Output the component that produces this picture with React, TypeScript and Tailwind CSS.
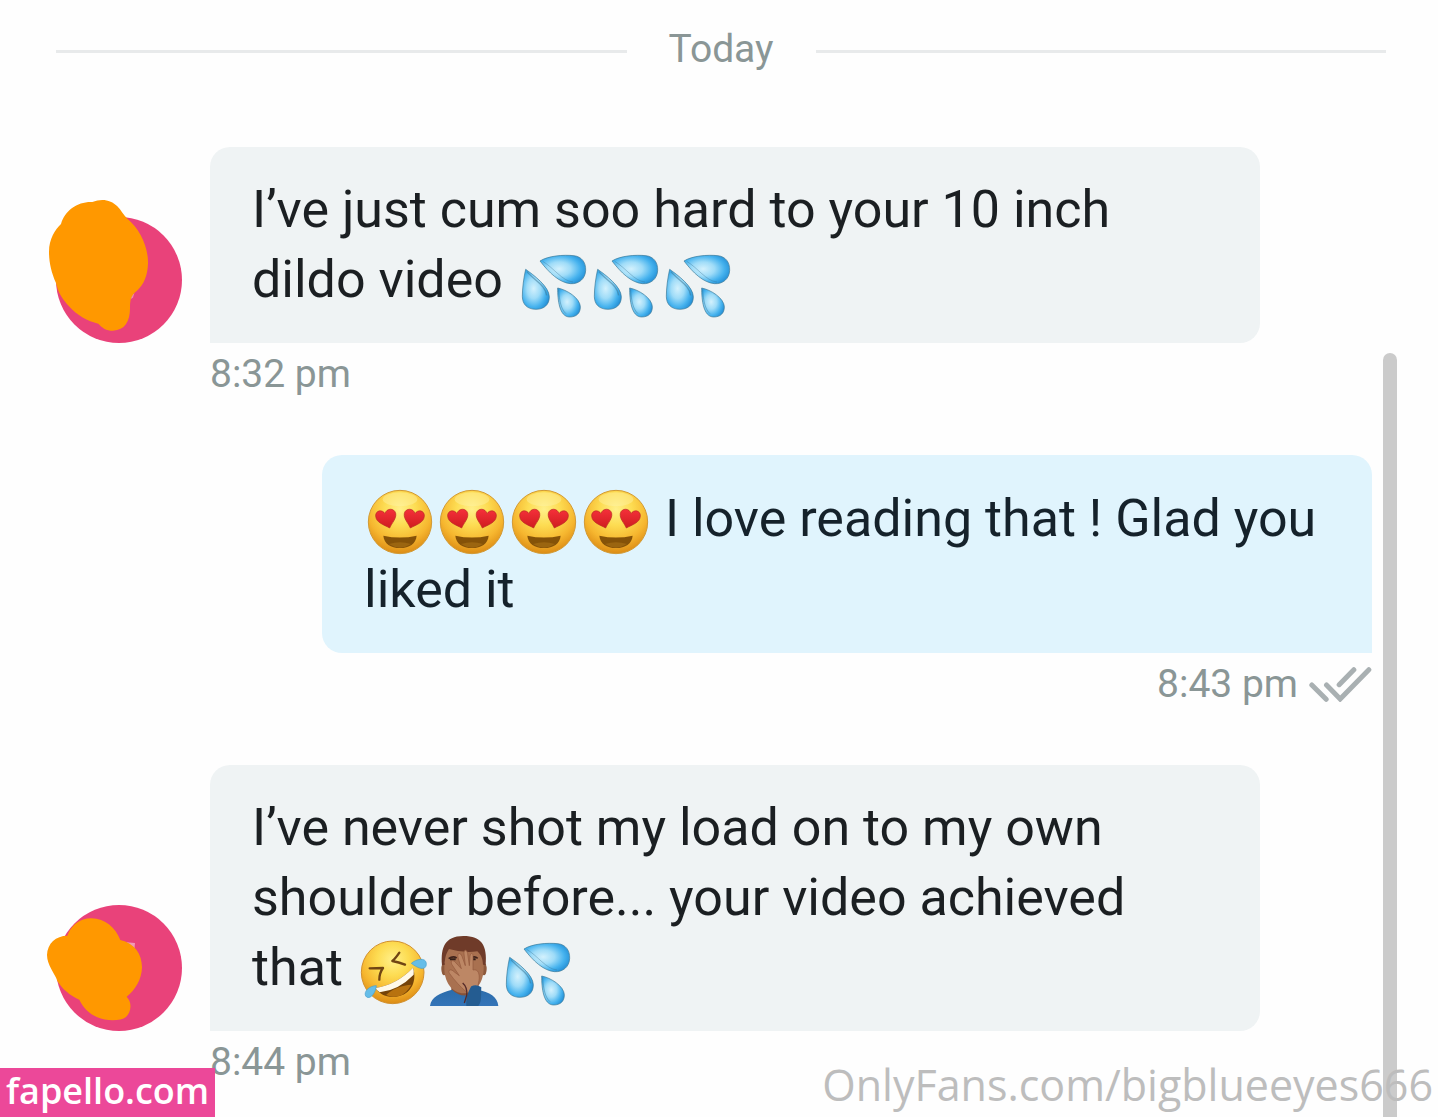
import type { ReactNode } from 'react';

function Gradients() {
  return (
    <svg className="absolute h-0 w-0" aria-hidden="true">
      <defs>
        <radialGradient id="face" cx="0.5" cy="0.3" r="0.72">
          <stop offset="0" stopColor="#fff08a" />
          <stop offset="0.35" stopColor="#fddc52" />
          <stop offset="0.7" stopColor="#f6b62f" />
          <stop offset="1" stopColor="#d98712" />
        </radialGradient>
        <radialGradient id="drop" cx="0.42" cy="0.48" r="0.62">
          <stop offset="0" stopColor="#d3f1fd" />
          <stop offset="0.4" stopColor="#9fdcf8" />
          <stop offset="0.75" stopColor="#45b2ee" />
          <stop offset="1" stopColor="#2590d6" />
        </radialGradient>
        <linearGradient id="heart" x1="0" y1="0" x2="0" y2="1">
          <stop offset="0" stopColor="#f5303a" />
          <stop offset="1" stopColor="#cf1c20" />
        </linearGradient>
        <linearGradient id="shirt" x1="0" y1="0" x2="0" y2="1">
          <stop offset="0" stopColor="#2b6cab" />
          <stop offset="1" stopColor="#3474b8" />
        </linearGradient>
      </defs>
    </svg>
  );
}

const emojiClass = 'mx-[3px] -my-2 inline-block h-[66px] w-[66px] overflow-visible align-middle';

function Drops() {
  return (
    <svg viewBox="32 29 198 198" className={emojiClass} role="img" aria-label="sweat droplets">
      <g fill="url(#drop)" stroke="#3d7896" strokeWidth="2" strokeLinejoin="round">
        <path d="M95 62 C120 46 165 43 197 46 C220 49 233 66 232 90 C231 116 211 132 186 130 C153 127 122 97 95 62Z" />
        <path d="M52 87 C76 104 123 139 123 170 C123 193 107 207 83 207 C57 207 42 192 42 168 C42 145 46 112 52 87Z" />
        <path d="M148 143 C175 148 216 174 216 200 C216 219 204 230 184 230 C153 230 148 179 148 143Z" />
      </g>
      <path d="M103 63 C137 83 161 122 194 125" fill="none" stroke="#37718f" strokeWidth="3" opacity="0.35" />
      <path d="M56 94 C77 120 112 135 115 165" fill="none" stroke="#37718f" strokeWidth="4" opacity="0.5" />
      <path d="M151 148 C153 180 158 207 173 220" fill="none" stroke="#37718f" strokeWidth="3" opacity="0.4" />
    </svg>
  );
}

function HeartEyes() {
  return (
    <svg viewBox="37 41 198 198" className={emojiClass} role="img" aria-label="heart eyes">
      <circle cx="136" cy="140" r="95" fill="url(#face)" stroke="#d29a35" strokeWidth="3" />
      <ellipse cx="136" cy="72" rx="52" ry="21" fill="#fff5ae" opacity="0.4" />
      <g fill="url(#heart)" stroke="#b72a20" strokeWidth="2">
        <path d="M105 158 C87 148 64 142 63 122 C62 105 83 101 91 115 C95 98 119 97 123 114 C126 130 112 142 105 158Z" />
        <path d="M167 158 C185 148 208 142 209 122 C210 105 189 101 181 115 C177 98 153 97 149 114 C146 130 160 142 167 158Z" />
      </g>
      <path d="M86 181 Q136 192 186 181 C184 205 164 218 136 218 C108 218 88 205 86 181Z" fill="#855208" />
      <path d="M103 206 Q136 196 169 206 Q136 228 103 206Z" fill="#9b6510" />
    </svg>
  );
}

function Rofl() {
  return (
    <svg viewBox="30 37 198 198" className={emojiClass} role="img" aria-label="rolling on the floor laughing">
      <circle cx="131" cy="140" r="94" fill="url(#face)" stroke="#d2902d" strokeWidth="3" />
      <g fill="none" stroke="#704513" strokeWidth="7" strokeLinecap="round" strokeLinejoin="round">
        <path d="M62 128 L102 127 Q91 142 91 162" />
        <path d="M151 81 Q139 99 130 106 Q149 109 168 117" />
      </g>
      <path d="M79 187 Q143 177 192 126 C204 162 190 201 151 211 C119 219 91 207 79 187Z" fill="#754308" />
      <path d="M79 187 Q143 177 192 126 Q196 137 194 147 Q150 193 92 200 Q84 195 79 187Z" fill="#fff9e9" />
      <path d="M111 208 C128 190 162 178 187 177 Q172 205 150 211 Q129 216 111 208Z" fill="#b8720f" />
      <path d="M187 113 C201 100 230 94 232 113 C233 135 211 132 187 113Z" fill="#65bde8" stroke="#449fcf" strokeWidth="2" />
      <path d="M82 180 C61 180 43 198 50 211 C60 225 80 205 82 180Z" fill="#65bde8" stroke="#449fcf" strokeWidth="2" />
    </svg>
  );
}

function Facepalm() {
  return (
    <svg viewBox="240 36 210 210" className="mx-px -my-2 inline-block h-[70px] w-[70px] align-middle" role="img" aria-label="man facepalming">
      <path d="M307 188 H382 V222 H307Z" fill="#865239" />
      <path d="M243 246 C247 217 272 208 309 197 Q334 222 365 211 L385 197 C422 204 446 218 448 246Z" fill="url(#shirt)" />
      <ellipse cx="285" cy="135" rx="8" ry="19" fill="#8d593c" />
      <ellipse cx="405" cy="135" rx="8" ry="19" fill="#8d593c" />
      <path d="M286 91 C286 58 311 53 345 53 C379 53 404 59 404 91 V132 C404 173 382 208 345 208 C308 208 286 173 286 132Z" fill="#a97150" />
      <path d="M279 123 C275 70 287 37 343 36 C398 36 415 64 410 123 L402 122 C401 102 395 91 385 82 Q344 88 300 75 C290 91 288 101 287 123Z" fill="#6f3b29" />
      <path d="M299 104 Q312 94 323 102 M366 102 Q377 95 386 103" fill="none" stroke="#40231b" strokeWidth="5" />
      <path d="M303 106 H320 M365 106 H380" stroke="#352019" strokeWidth="6" />
      <path d="M351 203 C333 187 318 171 302 149 C294 136 308 134 316 144 L331 155 L309 122 C302 109 312 106 320 116 L337 134 L327 100 C324 86 334 84 339 97 L349 125 L345 89 C344 75 354 75 356 89 L361 125 L363 97 C364 84 373 86 372 98 L372 138 C387 134 393 149 390 170 L385 194 L363 211Z" fill="#bd8765" stroke="#92583c" strokeWidth="2" />
      <path d="M352 246 C350 218 360 199 367 187 Q382 180 397 190 C395 215 400 231 388 246Z" fill="#245c91" />
      <path d="M341 177 Q356 190 353 214 L346 237" fill="none" stroke="#542a29" strokeWidth="4" />
    </svg>
  );
}

function AvatarOne() {
  return (
    <svg viewBox="78 111 378 378" className="h-[126px] w-[126px] shrink-0 overflow-visible" role="img" aria-label="Avatar">
      <circle cx="267" cy="300" r="189" fill="#e9427a" />
      <path d="M303 345 L313 340 L309 353 L301 358Z" fill="#ee8aa8" />
      <path d="M93 132 C105 91 143 64 187 66 C216 54 244 60 262 79 C274 91 279 104 292 116 C328 145 355 199 354 250 C353 284 343 313 321 332 C302 346 300 361 300 385 C300 425 284 451 249 452 C228 452 217 444 205 431 C173 424 141 406 117 379 C96 357 84 336 78 309 C63 275 57 245 57 215 C57 177 76 148 93 132Z" fill="#ff9800" />
    </svg>
  );
}

function AvatarTwo() {
  return (
    <svg viewBox="78 48 378 378" className="h-[126px] w-[126px] shrink-0 overflow-visible" role="img" aria-label="Avatar">
      <circle cx="267" cy="237" r="189" fill="#e9427a" />
      <path d="M289 160 L315 162 L313 183 L299 174Z" fill="#f09bb6" />
      <path d="M112 140 C124 108 149 88 184 88 C226 89 256 116 271 153 C313 162 336 195 336 235 C335 272 316 303 290 323 C308 342 303 370 288 384 C272 397 229 397 202 385 C177 373 160 357 148 332 C119 319 96 299 82 276 C75 253 51 229 51 198 C52 163 78 140 112 140Z" fill="#ff9800" />
    </svg>
  );
}

function Received({ avatar, time, children }: { avatar: ReactNode; time: string; children: ReactNode }) {
  return (
    <article className="mr-[126px]">
      <div className="flex items-end gap-7">
        {avatar}
        <p className="flex-1 rounded-[20px] rounded-bl-none bg-[#eff3f4] px-[42px] py-7 text-[52px] leading-[70px] text-[#1b1f22]">
          {children}
        </p>
      </div>
      <time className="ml-[154px] block text-[39px] leading-[62px] text-[#8a9696]">{time}</time>
    </article>
  );
}

export default function App() {
  return (
    <main className="relative min-h-screen overflow-hidden bg-[#fefefe] pr-[52px] pl-14 font-['Roboto',sans-serif]">
      <Gradients />
      <header className="flex h-[102px] items-center gap-[42px]">
        <div className="h-[3px] flex-1 bg-[#e8eaeb]" />
        <h1 className="pb-1 text-[39px] leading-[46px] text-[#8a9696]">Today</h1>
        <div className="h-[3px] flex-1 bg-[#e8eaeb]" />
      </header>
      <section className="mt-[45px] flex flex-col gap-[50px]" aria-label="Messages">
        <Received avatar={<AvatarOne />} time="8:32 pm">
          I’ve just cum soo hard to your 10 inch
          <br />
          dildo video <Drops /><Drops /><Drops />
        </Received>
        <article className="mr-[14px] ml-[266px]">
          <p className="rounded-[20px] rounded-br-none bg-[#e0f4fd] py-7 pl-[42px] text-[52px] leading-[71px] whitespace-nowrap text-[#15222b]">
            <HeartEyes /><HeartEyes /><HeartEyes /><HeartEyes /> I love reading that ! Glad you
            <br />
            liked it
          </p>
          <div className="flex items-center justify-end gap-[11px]">
            <time className="text-[39px] leading-[62px] text-[#8a9696]">8:43 pm</time>
            <svg viewBox="478 81 188 108" className="h-9 w-[63px]" role="img" aria-label="Read" fill="none" stroke="#a9b0b2" strokeWidth="15" strokeLinecap="round">
              <path d="M486 138 L529 181 M530 138 L571 180 L657 92 M568 137 L612 92" />
            </svg>
          </div>
        </article>
        <Received avatar={<AvatarTwo />} time="8:44 pm">
          I’ve never shot my load on to my own
          <br />
          shoulder before... your video achieved
          <br />
          that <Rofl /><Facepalm /><Drops />
        </Received>
      </section>
      <div className="absolute top-[353px] right-[41px] bottom-0 w-[14px] rounded-t-full bg-[#cbcbcb]" />
      <span className="absolute bottom-0 left-0 bg-[#ec4899] px-[6px] pb-1 font-['Open_Sans',sans-serif] text-[36px] leading-[45px] font-semibold text-white">
        fapello.com
      </span>
      <span className="absolute right-[5px] bottom-0 font-['Open_Sans',sans-serif] text-[43px] leading-[64px] text-[#bdbdbd]">
        OnlyFans.com/bigblueeyes666
      </span>
    </main>
  );
}
